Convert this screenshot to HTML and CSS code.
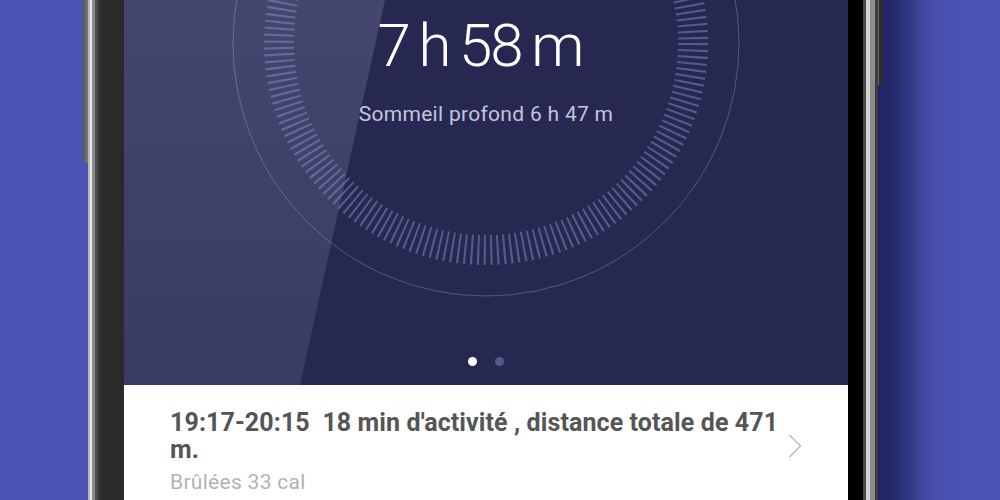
FILE: index.html
```html
<!DOCTYPE html>
<html>
<head>
  <title>Sommeil</title>
  <link rel="stylesheet" href="styles.css">
</head>
<body>
  <div class="page">
    <div class="phone">
      <div class="screen">
        <div class="hero">
          <svg class="dial" viewBox="0 0 724 385" width="724" height="385">
            <circle cx="362" cy="43" r="253" fill="none" stroke="rgba(255,255,255,0.22)" stroke-width="1"/>
            <circle cx="362" cy="43" r="207" fill="none" stroke="rgba(150,160,210,0.42)" stroke-width="30" stroke-dasharray="2.1 4.403"/>
          </svg>
          <div class="hero-body">
            <div class="total">7 h 58 m</div>
            <div class="deep">Sommeil profond 6 h 47 m</div>
            <div class="dots">
              <span class="dot active"></span>
              <span class="dot"></span>
            </div>
          </div>
        </div>

        <div class="card">
          <div class="card-text">
            <div class="card-title">19:17-20:15&nbsp; 18 min d'activité , distance totale de 471 m.</div>
            <div class="card-sub">Brûlées 33 cal</div>
          </div>
          <svg class="chevron" width="14" height="24" viewBox="0 0 14 24">
            <polyline points="1.5,1 12.5,12 1.5,23" fill="none" stroke="#bdbdbd" stroke-width="1.6"/>
          </svg>
        </div>
      </div>
    </div>
  </div>
</body>
</html>
```

FILE: styles.css
```css
html, body {
  margin: 0;
  padding: 0;
  background: #4b53b3;
  font-family: 'Roboto', 'Noto Sans', sans-serif;
}

.page {
  height: 500px;
  overflow: hidden;
}

/* phone body: metal rim + bezel drawn as stripes */
.phone {
  position: relative;
  width: 790px;
  box-sizing: border-box;
  margin: -40px 0 0 88px;
  padding: 40px 30px 0 36px;
  background: linear-gradient(to right,
    #b9b9b9 0 2px, #e8e8e8 2px 4px, #8a8a8a 4px 7px, #4c4c4c 7px 10px, #333 10px 13px,
    #2a2a2a 13px 36px,
    #222 36px 760px,
    #000 760px 775px, #4a4a4a 775px 778px, #d4d4d4 778px 782px, #8c8c8c 782px 787px, #3c3c3c 787px 790px);
  box-shadow: 40px 0 30px -6px rgba(32, 35, 95, 0.95);
}

.phone::before {
  content: '';
  position: absolute;
  left: -5px;
  top: 40px;
  width: 5px;
  height: 163px;
  background: linear-gradient(to right, #555, #7a7a7a);
  border-radius: 0 0 0 2px;
}

.phone::after {
  content: '';
  position: absolute;
  right: -5px;
  top: 40px;
  width: 5px;
  height: 85px;
  background: #2e2e2e;
  border-left: 1px solid #666;
  box-sizing: border-box;
  border-radius: 0 0 2px 0;
}

.screen {
  width: 724px;
  background: #fff;
}

.hero {
  position: relative;
  height: 385px;
  background: #262852;
  overflow: hidden;
}

.hero::before {
  content: '';
  position: absolute;
  inset: 0;
  background: linear-gradient(#44466f, #393b65);
  clip-path: polygon(0 0, 261px 0, 176px 100%, 0 100%);
}

.dial {
  position: absolute;
  left: 0;
  top: 0;
}

.hero-body {
  position: relative;
  height: 100%;
  display: flex;
  flex-direction: column;
  align-items: center;
  box-sizing: border-box;
  padding-top: 16px;
}

.total {
  padding-right: 12px;
  font-size: 60px;
  line-height: 60px;
  font-weight: 300;
  letter-spacing: -2px;
  word-spacing: -3px;
  color: #fff;
}

.deep {
  margin-top: 28px;
  font-size: 21px;
  line-height: 21px;
  letter-spacing: 0.3px;
  color: #c3c5da;
}

.dots {
  margin-top: auto;
  margin-bottom: 19px;
  display: flex;
  gap: 18px;
}

.dot {
  width: 9px;
  height: 9px;
  border-radius: 50%;
  background: #575a86;
}

.dot.active {
  background: #fff;
}

.card {
  display: flex;
  align-items: center;
  padding: 24px 46px 60px 46px;
  border-top: 1px solid #cfd0e0;
  margin-top: -1px;
}

.card-text {
  flex: 1;
}

.card-title {
  font-size: 25px;
  line-height: 27px;
  font-weight: 700;
  letter-spacing: 0.1px;
  color: #555;
}

.card-sub {
  margin-top: 7px;
  font-size: 21px;
  line-height: 24px;
  letter-spacing: 0.3px;
  color: #b3b3b3;
}

.chevron {
  flex-shrink: 0;
  margin-top: -12px;
}
```
